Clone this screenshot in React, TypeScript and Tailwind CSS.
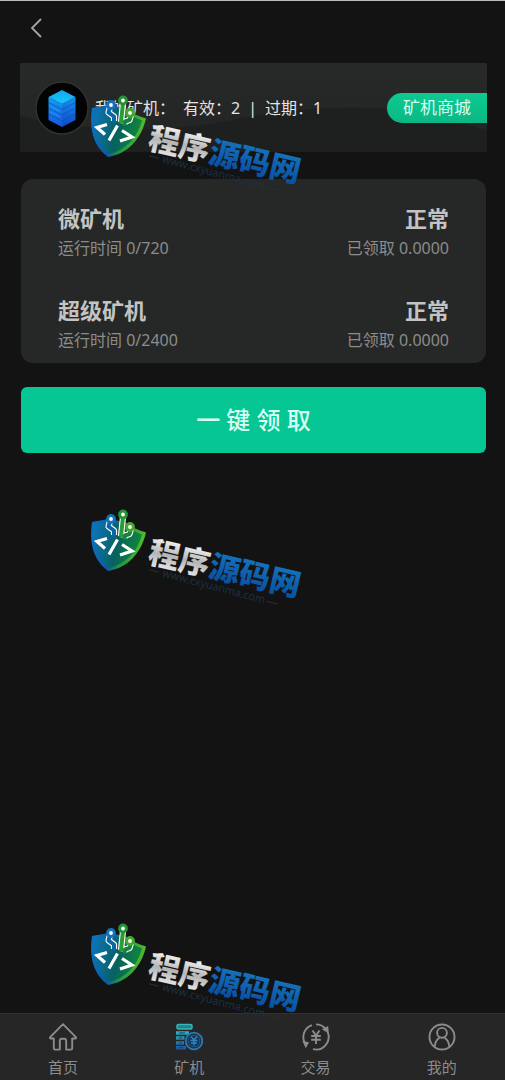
import type { ReactNode } from 'react';

interface Miner {
  name: string;
  status: string;
  ran: number;
  total: number;
  claimed: string;
}

interface Tab {
  label: string;
  href: string;
  icon: ReactNode;
}

const miners: Miner[] = [
  { name: '微矿机', status: '正常', ran: 0, total: 720, claimed: '0.0000' },
  { name: '超级矿机', status: '正常', ran: 0, total: 2400, claimed: '0.0000' },
];

function HomeIcon() {
  return (
    <svg className="w-7 h-7" viewBox="0 0 28 28" fill="none" stroke="#8c8c8c" strokeWidth={1.9} strokeLinejoin="round">
      <path d="M14 1.2 1.2 14.2c-.5.6-.2 1.3.6 1.3h3v9.700c0 .9.5 1.400 1.400 1.400h4.600v-8.400c0-1.500.8-2.400 2.200-2.400h2c1.400 0 2.200.9 2.200 2.400v8.400h4.600c.9 0 1.400-.5 1.400-1.400v-9.700h3c.8 0 1.100-.7.6-1.300Z" />
    </svg>
  );
}

function MinerIcon() {
  return (
    <svg className="w-7 h-7" viewBox="0 0 28 28" fill="none">
      <defs>
        <linearGradient id="coins" x1="0" y1="0" x2="0" y2="1">
          <stop offset="0" stopColor="#2fb3bd" />
          <stop offset="1" stopColor="#1c55a0" />
        </linearGradient>
      </defs>
      <rect x="2" y="1.500" width="15" height="4.500" rx="1.500" fill="#2a7d8a" stroke="#2fb9bd" strokeWidth="1.500" />
      <path
        d="M1 8.200h13v3.600H1zM1 13.200h8.500v3.600H1zM1 18.200h8v3.600H1zM1 23h10v3.500H1z"
        fill="url(#coins)"
      />
      <path d="M4 10h6M4 15h3M4 20h3M4 24.800h4" stroke="#1d3c55" strokeWidth="1" />
      <circle cx="19" cy="18" r="8.300" fill="#1d3346" stroke="#2878ba" strokeWidth="1.800" />
      <circle cx="19" cy="18" r="5.800" stroke="#20588c" strokeWidth="1" />
      <path d="m16 13.500 3 3.500 3-3.500M19 17v5.500M15.500 17.500h7M16 20h6" stroke="#2c86c8" strokeWidth="1.400" />
    </svg>
  );
}

function TradeIcon() {
  return (
    <svg className="w-7 h-7" viewBox="0 0 28 28" fill="none" stroke="#8c8c8c" strokeWidth={1.900}>
      <path d="M10 2.100A12.600 12.600 0 0 0 2.600 19.500" />
      <path d="M14 1.400c3.600 0 6.600 1.300 9 3.700" />
      <path d="M25.600 9a12.600 12.600 0 0 1-14.600 17.200" />
      <path d="m19.800 6.200 6.400-3.200.6 7.500z" fill="#8c8c8c" stroke="none" />
      <path d="m.4 18 6.600 1.200-3.200 6z" fill="#8c8c8c" stroke="none" />
      <path d="m10.500 7.500 3.500 5 3.500-5M14 12.500V21M9.200 13h9.600M9.200 16.800h9.600" />
    </svg>
  );
}

function UserIcon() {
  return (
    <svg className="w-7 h-7" viewBox="0 0 28 28" fill="none" stroke="#8c8c8c" strokeWidth={1.900}>
      <circle cx="14" cy="14" r="12.500" />
      <circle cx="14" cy="9.800" r="4.900" />
      <path d="M6.800 23.500c.2-4.600 2.300-7.300 5-9M21.200 23.500c-.2-4.600-2.300-7.300-5-9" />
    </svg>
  );
}

const tabs: Tab[] = [
  { label: '首页', href: '#home', icon: <HomeIcon /> },
  { label: '矿机', href: '#miner', icon: <MinerIcon /> },
  { label: '交易', href: '#trade', icon: <TradeIcon /> },
  { label: '我的', href: '#me', icon: <UserIcon /> },
];

function ServerLogo() {
  return (
    <svg className="w-[54px] h-[54px] shrink-0" viewBox="0 0 54 54">
      <defs>
        <linearGradient id="serverTop" x1="0" y1="0" x2="0" y2="1">
          <stop offset="0" stopColor="#12a9f5" />
          <stop offset="1" stopColor="#16c6f7" />
        </linearGradient>
        <linearGradient id="serverLeft" x1="0" y1="0" x2="0" y2="1">
          <stop offset="0" stopColor="#159ff0" />
          <stop offset="1" stopColor="#1454e0" />
        </linearGradient>
        <linearGradient id="serverRight" x1="0" y1="0" x2="0" y2="1">
          <stop offset="0" stopColor="#1490ec" />
          <stop offset="1" stopColor="#1049c8" />
        </linearGradient>
      </defs>
      <circle cx="27" cy="27" r="26" fill="#020305" stroke="#31312e" strokeWidth="1.500" />
      <path d="M13.500 16 27 23v23l-13.500-7z" fill="url(#serverLeft)" />
      <path d="M40.500 16 27 23v23l13.500-7z" fill="url(#serverRight)" />
      <path d="M27 9 40.500 16 27 23 13.500 16z" fill="url(#serverTop)" />
      <path
        d="m13.500 21.500 13.500 7 13.500-7M13.500 27l13.500 7 13.500-7M13.500 33l13.500 7 13.500-7"
        fill="none"
        stroke="#0b4fb8"
        strokeWidth=".7"
      />
      <path d="m16 26 8 4M16 31.500l8 4" stroke="#37b6f7" strokeWidth=".8" strokeDasharray="1.500 1" />
    </svg>
  );
}

function Watermark({ id }: { id: string }) {
  return (
    <svg className="w-60 h-[120px]" viewBox="0 0 240 120" fill="none">
      <defs>
        <linearGradient id={`${id}-edge`} x1="12" y1="40" x2="66" y2="48" gradientUnits="userSpaceOnUse">
          <stop offset="0" stopColor="#0b71b8" />
          <stop offset=".35" stopColor="#0c58a8" />
          <stop offset=".55" stopColor="#1f9447" />
          <stop offset="1" stopColor="#58bd2b" />
        </linearGradient>
        <linearGradient id={`${id}-body`} x1="14" y1="36" x2="62" y2="46" gradientUnits="userSpaceOnUse">
          <stop offset="0" stopColor="#0d72b4" />
          <stop offset=".5" stopColor="#07615f" />
          <stop offset="1" stopColor="#118a35" />
        </linearGradient>
        <linearGradient id={`${id}-silver`} x1="0" y1="0" x2="0" y2="1">
          <stop offset=".2" stopColor="#f4f4f4" />
          <stop offset=".55" stopColor="#b5b5b5" />
          <stop offset=".9" stopColor="#e8e8e8" />
        </linearGradient>
        <linearGradient id={`${id}-blue`} x1="0" y1="0" x2="0" y2="1">
          <stop offset=".2" stopColor="#1672bd" />
          <stop offset="1" stopColor="#06489a" />
        </linearGradient>
      </defs>

      {/* Shield */}
      <path d="M12 22c7-1.500 11-1.500 17-3.500l20 5c5 5 9 6.500 17 9C61 54 47 68 28 71 13 60 9 42 12 22Z" fill={`url(#${id}-edge)`} />
      <path d="M14.500 24c7-1 11-1.500 15-2.500l18 4.500c4 4 8 6 14.500 8.500C57 53 45 64 29 68 16 57 12 42 14.500 24Z" fill={`url(#${id}-body)`} />

      {/* Circuit nodes */}
      <g stroke="#fff" strokeWidth="6.200" strokeLinejoin="round">
        <path d="m30 21-1.500 5.500 5.500 4v4.500M43 17l-2 19M51 29l-1.500 5-4.500 1.500-.5 2.500" />
      </g>
      <g strokeWidth="4" strokeLinecap="round" strokeLinejoin="round">
        <path d="m30 21-1.500 5.500 5.500 4v4.500" stroke="#0b66a8" />
        <path d="m43 17-2 19" stroke="#2a9c35" />
        <path d="m51 29-1.500 5-4.500 1.500-.5 2.500" stroke="#16833f" />
      </g>
      <circle cx="31" cy="19" r="3.400" fill="#fff" stroke="#1471bb" strokeWidth="3" />
      <circle cx="43" cy="14.500" r="3.400" fill="#fff" stroke="#239336" strokeWidth="3" />
      <circle cx="50" cy="27" r="3.400" fill="#fff" stroke="#45a82f" strokeWidth="3" />
      <path d="m27 38.500-10 3 8 7M37.500 39.500l-8.500 15M42 44.500l10 6.500-12 4" stroke="#fff" strokeWidth="3.200" />

      {/* Wordmark */}
      <g transform="rotate(13 66 61)" fontFamily="'Noto Sans CJK SC', sans-serif" fontWeight="900">
        <text x="67" y="62" fontSize="31" fill={`url(#${id}-silver)`}>程序</text>
        <text x="129" y="62" fontSize="31" fill={`url(#${id}-blue)`}>源码网</text>
      </g>
      <g transform="rotate(15 70 70)">
        <path d="M69 70h10M191 70h11" stroke="#2a2f31" />
        <text x="83" y="73" fontSize="11" fontFamily="'Open Sans', sans-serif" fill="#1b3243">www.cxyuanma.com</text>
      </g>
    </svg>
  );
}

function MinerSummary() {
  return (
    <section className="relative overflow-hidden rounded-xs flex items-center h-[89px] pl-[15px] bg-linear-to-b from-[#282a29] to-[#222423]">
      <svg className="absolute inset-0 w-full h-full" viewBox="0 0 467 89" preserveAspectRatio="none">
        <path d="M0 53c60 14 120 18 190 8 90-18 180-28 277 7v21H0z" fill="#1d1f1e" fillOpacity=".8" />
      </svg>
      <div className="relative flex flex-1 items-center">
        <ServerLogo />
        <p className="ml-1.5 flex gap-2 text-base text-[#e4e4e4] whitespace-nowrap">
          <span>我的矿机：</span>
          <span>有效：2</span>
          <span>|</span>
          <span>过期：1</span>
        </p>
        <button
          type="button"
          className="ml-auto h-[30px] px-4 rounded-l-full bg-linear-to-b from-[#0ccb92] to-[#0bb784] text-[17px] leading-[30px] text-[#d5fff0] whitespace-nowrap"
        >
          矿机商城
        </button>
      </div>
    </section>
  );
}

function MinerRow({ miner }: { miner: Miner }) {
  return (
    <li className="flex justify-between px-[37px] pt-6 pb-2">
      <div>
        <h2 className="text-[22px] leading-[30px] font-bold text-[#c3c3c3]">{miner.name}</h2>
        <p className="text-base leading-[30px] text-[#8c8c8c]">
          运行时间 {miner.ran}/{miner.total}
        </p>
      </div>
      <div className="text-right">
        <p className="text-[22px] leading-[30px] font-bold text-[#c3c3c3]">{miner.status}</p>
        <p className="text-base leading-[30px] text-[#8c8c8c]">已领取 {miner.claimed}</p>
      </div>
    </li>
  );
}

export default function App() {
  return (
    <div className="relative flex flex-col min-h-screen overflow-hidden bg-[#131313] border-t border-[#b9bdbb] font-['Noto_Sans','Noto_Sans_CJK_SC',sans-serif]">
      <header className="flex items-center h-[54px] px-6">
        <button type="button" aria-label="返回" className="p-1">
          <svg className="w-4 h-5" viewBox="0 0 16 20" fill="none" stroke="#a4a4a4" strokeWidth={1.800}>
            <path d="M13 1 4 10l9 9" />
          </svg>
        </button>
      </header>

      <main className="flex-1 pl-5 pr-[18px] pt-2">
        <MinerSummary />

        <ul className="mt-[27px] mx-px rounded-xl bg-[#262827]">
          {miners.map((miner) => (
            <MinerRow key={miner.name} miner={miner} />
          ))}
        </ul>

        <div className="mt-6 mx-px">
          <button type="button" className="w-full h-[66px] rounded-md bg-[#06c794] text-2xl font-medium text-[#d9fff3]">
            一 键 领 取
          </button>
        </div>
      </main>

      <nav className="grid grid-cols-4 h-[67px] border-t border-[#303131] bg-[#262626]">
        {tabs.map((tab) => (
          <a key={tab.label} href={tab.href} className="flex flex-col items-center pt-[9px] text-[15px] leading-6 text-[#8c8c8c]">
            {tab.icon}
            <span className="mt-1">{tab.label}</span>
          </a>
        ))}
      </nav>

      {/* Site watermark, repeated down the page */}
      <div className="absolute left-20 top-[85px] flex flex-col gap-[294px] pointer-events-none">
        <Watermark id="wm1" />
        <Watermark id="wm2" />
        <Watermark id="wm3" />
      </div>
    </div>
  );
}
